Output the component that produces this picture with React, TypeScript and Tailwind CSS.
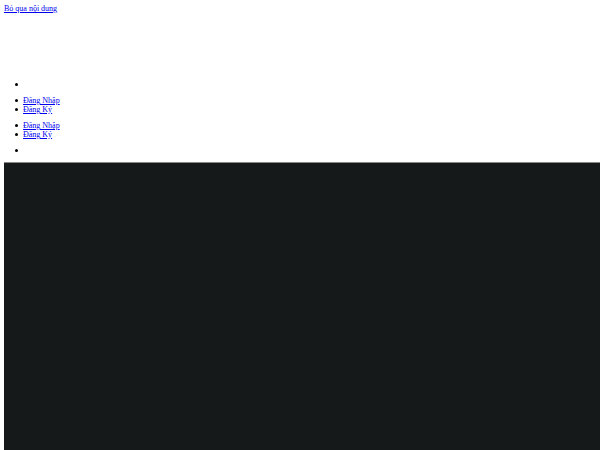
const links = [
  { label: "Đăng Nhập", href: "#login" },
  { label: "Đăng Ký", href: "#register" },
];

const itemClass =
  "flex h-[9px] items-center gap-[5px] before:size-[3px] before:rounded-full before:bg-black before:content-['']";

function AccountLinks() {
  return (
    <ul className="pl-[11px]">
      {links.map((link) => (
        <li key={link.href} className={itemClass}>
          <a className="text-[#0000ee] underline" href={link.href}>
            {link.label}
          </a>
        </li>
      ))}
    </ul>
  );
}

function EmptyItem() {
  return (
    <ul className="pl-[11px]">
      <li className={itemClass} />
    </ul>
  );
}

export default function App() {
  return (
    <div className="flex h-screen flex-col overflow-hidden bg-white pt-1 pl-1 font-['Liberation_Serif',serif] text-[8px] leading-[9px] text-black">
      <header className="pb-[7px]">
        <a className="block w-fit text-[#0000ee] underline" href="#content">
          Bỏ qua nội dung
        </a>
        <nav className="flex flex-col gap-[7px] pt-[67px]">
          <EmptyItem />
          <AccountLinks />
          <AccountLinks />
          <EmptyItem />
        </nav>
      </header>
      <main id="content" className="flex-1 border-t border-[#888888] bg-[#151919]" />
    </div>
  );
}
